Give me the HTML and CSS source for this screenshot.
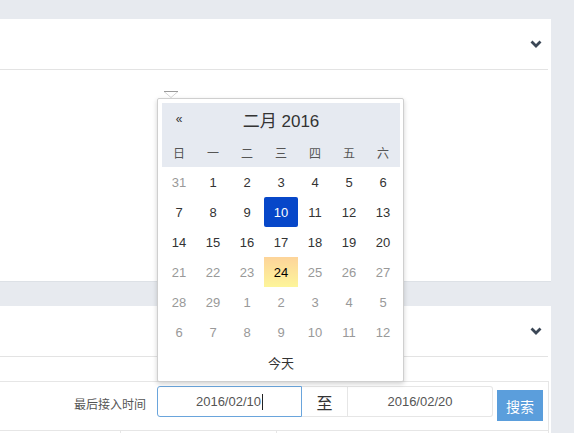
FILE: index.html
```html
<!DOCTYPE html>
<html lang="zh">
<head>
<meta charset="utf-8">
<title>日期选择</title>
<link rel="stylesheet" href="styles.css">
</head>
<body>
<div class="page">
  <section class="panel panel-first">
    <div class="panel-head">
      <svg class="chev" width="12" height="8" viewBox="0 0 12 8"><polyline points="1.5,1.5 6,6 10.5,1.5" fill="none" stroke="#3b4756" stroke-width="2.8"/></svg>
    </div>
  </section>
  <div class="gap"></div>
  <section class="panel panel-second">
    <div class="panel-head">
      <svg class="chev" width="12" height="8" viewBox="0 0 12 8"><polyline points="1.5,1.5 6,6 10.5,1.5" fill="none" stroke="#3b4756" stroke-width="2.8"/></svg>
    </div>
    <div class="spacer"></div>
    <div class="form-box">
      <div class="form-label">最后接入时间</div>
      <div class="input-group">
        <div class="date-input focused">2016/02/10<span class="caret"></span></div>
        <div class="addon">至</div>
        <div class="date-input last">2016/02/20</div>
      </div>
      <button class="btn-search">搜索</button>
    </div>
    <div class="table-row">
      <div class="cell c1"></div>
      <div class="cell c2"></div>
      <div class="cell c3"></div>
    </div>
  </section>
</div>

<svg class="picker-arrow" width="16" height="7" viewBox="0 0 16 7"><polygon points="1,0.5 15,0.5 8,6.5" fill="#fff" stroke="#d6d6d6" stroke-width="1"/><line x1="1" y1="0.5" x2="15" y2="0.5" stroke="#9a9a9a" stroke-width="1"/></svg>
<div class="datepicker">
  <table class="cal">
    <colgroup>
      <col class="col"><col class="col"><col class="col"><col class="col"><col class="col"><col class="col"><col class="col">
    </colgroup>
    <thead>
      <tr class="title-row">
        <th class="prev">«</th>
        <th colspan="5" class="month">二月 2016</th>
        <th></th>
      </tr>
      <tr class="dow-row">
        <th>日</th><th>一</th><th>二</th><th>三</th><th>四</th><th>五</th><th>六</th>
      </tr>
    </thead>
    <tbody>
      <tr><td class="old">31</td><td>1</td><td>2</td><td>3</td><td>4</td><td>5</td><td>6</td></tr>
      <tr><td>7</td><td>8</td><td>9</td><td class="active">10</td><td>11</td><td>12</td><td>13</td></tr>
      <tr><td>14</td><td>15</td><td>16</td><td>17</td><td>18</td><td>19</td><td>20</td></tr>
      <tr><td class="old">21</td><td class="old">22</td><td class="old">23</td><td class="today">24</td><td class="old">25</td><td class="old">26</td><td class="old">27</td></tr>
      <tr><td class="old">28</td><td class="old">29</td><td class="old">1</td><td class="old">2</td><td class="old">3</td><td class="old">4</td><td class="old">5</td></tr>
      <tr><td class="old">6</td><td class="old">7</td><td class="old">8</td><td class="old">9</td><td class="old">10</td><td class="old">11</td><td class="old">12</td></tr>
    </tbody>
    <tfoot>
      <tr><th colspan="7" class="today-btn">今天</th></tr>
    </tfoot>
  </table>
</div>
</body>
</html>
```

FILE: styles.css
```css
* { box-sizing: border-box; }
html, body { margin: 0; padding: 0; }
body {
  background: #e7eaef;
  font-family: "Liberation Sans", Arial, "Noto Sans CJK SC", sans-serif;
  color: #333;
  width: 574px;
  height: 433px;
  overflow: hidden;
  position: relative;
}
.page { padding-top: 19px; width: 551px; }
.panel { background: #fff; }
.panel-first { height: 263px; border-bottom: 1px solid #dde1e6; }
.panel-head {
  height: 51px;
  margin-right: 3px;
  border-bottom: 1px solid #e3e3e3;
  display: flex;
  justify-content: flex-end;
  align-items: center;
  padding-right: 6px;
}
.chev { display: block; }
.gap { height: 24px; }
.spacer { height: 24px; }
.form-box {
  margin-right: 2px;
  border: 1px solid #e6e6e6;
  border-left: none;
  height: 50px;
  padding-top: 4px;
  display: flex;
  align-items: flex-start;
}
.form-label {
  width: 146px;
  margin-right: 11px;
  margin-top: 4px;
  line-height: 31px;
  text-align: right;
  font-size: 12px;
  color: #555;
}
.input-group { display: flex; height: 31px; }
.date-input {
  width: 145px;
  height: 31px;
  border: 1px solid #e6e6e6;
  display: flex;
  align-items: center;
  justify-content: center;
  font-size: 13px;
  color: #555;
}
.date-input.focused {
  border-color: #6aa5dc;
  border-radius: 3px 0 0 3px;
}
.date-input.last { border-radius: 0 3px 3px 0; border-left: none; }
.caret {
  display: inline-block;
  width: 1px;
  height: 16px;
  background: #222;
  margin-left: 1px;
}
.addon {
  width: 46px;
  height: 31px;
  border-top: 1px solid #e6e6e6;
  border-bottom: 1px solid #e6e6e6;
  border-right: 1px solid #e6e6e6;
  display: flex;
  align-items: center;
  justify-content: center;
  font-size: 16px;
  color: #333;
}
.btn-search {
  margin-left: 4px;
  margin-top: 4px;
  width: 46px;
  height: 31px;
  border: none;
  background: #5b9edc;
  color: #fff;
  font-family: inherit;
  font-size: 14px;
  padding: 0;
}
.table-row {
  display: flex;
  height: 10px;
  margin-right: 2px;
}
.cell { border-right: 1px solid #e6e6e6; }
.c1 { width: 121px; }
.c2 { width: 156px; }
.c3 { flex: 1; }

.picker-arrow { position: absolute; left: 163px; top: 91px; }
.datepicker {
  position: absolute;
  left: 157px;
  top: 98px;
  width: 247px;
  height: 284px;
  background: #fff;
  border: 1px solid #cfcfcf;
  border-radius: 2px;
  box-shadow: 0 2px 5px rgba(0, 0, 0, 0.18);
  padding: 4px;
}
.cal {
  border-collapse: collapse;
  border-spacing: 0;
  width: 238px;
  table-layout: fixed;
}
.col { width: 34px; }
.cal th, .cal td {
  padding: 0;
  text-align: center;
}
.title-row th { background: #e6eaf1; height: 36px; font-weight: normal; padding-bottom: 4px; }
.prev { font-size: 12px; color: #333; }
.month { font-size: 17px; color: #333; }
.dow-row th {
  background: #e6eaf1;
  height: 28px;
  font-weight: normal;
  font-size: 12px;
  color: #555;
  padding-bottom: 2px;
}
.cal td {
  height: 30px;
  font-size: 13px;
  color: #333;
}
.cal td.old { color: #999; }
.cal td.active { background: #0747c9; color: #fff; border-radius: 2px; }
.cal td.today { background: linear-gradient(#fdd49a, #fdf59a); color: #000; }
.today-btn { height: 30px; font-weight: normal; font-size: 13px; color: #333; }
```
